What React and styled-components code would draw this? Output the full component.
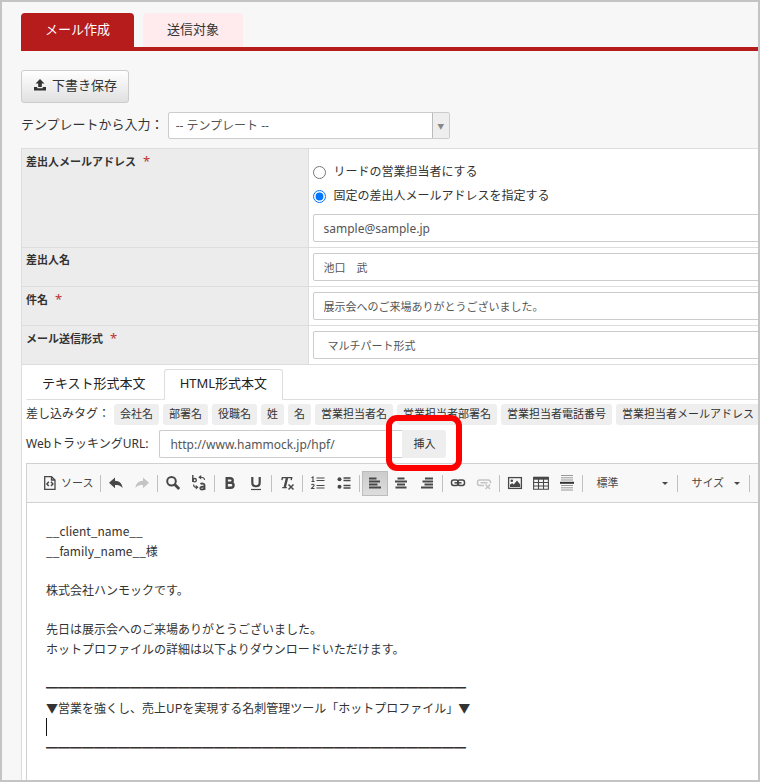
import React from 'react'
import styled, { createGlobalStyle } from 'styled-components'

const tags = ['会社名', '部署名', '役職名', '姓', '名', '営業担当者名', '営業担当者部署名', '営業担当者電話番号', '営業担当者メールアドレス']

function Icon({ children, ...rest }) {
  return (
    <svg width="16" height="16" viewBox="0 0 16 16" fill="none" stroke="#484848" aria-hidden="true" {...rest}>
      {children}
    </svg>
  )
}

const icons = {
  source: (
    <Icon strokeWidth="1.3">
      <path d="M2.700 1.700h6.800L13 5v9.300H2.700z" />
      <path d="M9.500 1.700V5H13" />
      <path d="M6.800 6.800L4.900 8.900l1.900 2.100M9 6.800l1.900 2.100L9 11" strokeWidth="1.500" />
    </Icon>
  ),
  undo: (
    <Icon stroke="none" fill="#484848">
      <path d="M7 2.500v3.300c4 .2 7 2.200 7.600 7.200-2-2.500-4.300-3-7.600-3v3.200L1 7.800z" />
    </Icon>
  ),
  redo: (
    <Icon stroke="none" fill="#c4c4c4">
      <path d="M9 2.500v3.300c-4 .2-7 2.200-7.600 7.200 2-2.500 4.300-3 7.600-3v3.200l6-5.400z" />
    </Icon>
  ),
  find: (
    <Icon strokeWidth="2">
      <circle cx="6.500" cy="6.300" r="4.300" />
      <path d="M9.800 9.600l4.400 4.400" strokeWidth="2.800" />
    </Icon>
  ),
  replace: (
    <Icon strokeWidth="1.400">
      <path d="M1.800 0v7" />
      <circle cx="3.600" cy="5.200" r="1.700" />
      <path d="M9.500 9.200c1-1 4-1 4 .8v5M13.500 11.500c-2 0-4.200.2-4.200 1.800 0 1.800 3.200 1.500 4.200 0" strokeWidth="1.800" />
      <path d="M13.500 5c0-2-1.500-2.700-4-2.700M2.500 9.500c0 2 1 2.800 3 2.800" strokeWidth="1.100" />
      <path d="M10.200 0v4.500L7.200 2.300zM4.800 10v4.600l2.800-2.300z" fill="#484848" stroke="none" />
    </Icon>
  ),
  bold: (
    <Icon strokeWidth="2.400">
      <path d="M4.700 3.200h3.500c3.400 0 3.400 4.600 0 4.600H4.700zM4.700 7.800h4c3.800 0 3.800 5 0 5h-4z" />
    </Icon>
  ),
  underline: (
    <Icon strokeWidth="2.200">
      <path d="M4.300 2v5.500c0 5 7.400 5 7.400 0V2" />
      <path d="M3 14.500h10" strokeWidth="1.200" />
    </Icon>
  ),
  clear: (
    <Icon strokeWidth="2.400">
      <path d="M8 3L5.800 12" />
      <path d="M2.900 5.200l.5-2.600h9.300l-.5 2.600M3.200 12.600h4.600" strokeWidth="1.400" />
      <path d="M9.500 9.500l5 5M14.500 9.500l-5 5" strokeWidth="1.500" />
    </Icon>
  ),
  numbered: (
    <Icon strokeWidth="1.200">
      <path d="M6.500 3h8M6.500 5.500h8M6.500 10.500h8M6.500 13h8" />
      <path d="M1.500 2.800L3 2v4.500M1.500 6.500h3M1.500 10c.5-1.200 2.600-1 2.600.3 0 1.200-2 2-2.600 3.200h3" strokeWidth="1.100" />
    </Icon>
  ),
  bulleted: (
    <Icon strokeWidth="1.300">
      <path d="M7.500 3h7M7.500 5.500h7M7.500 10.500h7M7.500 13h7" />
      <circle cx="3.500" cy="4.300" r="2" fill="#484848" stroke="none" />
      <circle cx="3.500" cy="11.800" r="2" fill="#484848" stroke="none" />
    </Icon>
  ),
  left: (
    <Icon strokeWidth="1.900">
      <path d="M2 3.500h7.500M2 6.500h11M2 9.500h8.500M2 12.500h12" />
    </Icon>
  ),
  center: (
    <Icon strokeWidth="1.900">
      <path d="M4.500 3.500h7M2 6.500h12M4 9.500h8M2.500 12.500h11" />
    </Icon>
  ),
  right: (
    <Icon strokeWidth="1.900">
      <path d="M6 3.500h8M3.500 6.500H14M5.500 9.500H14M2 12.500h12" />
    </Icon>
  ),
  link: (
    <Icon strokeWidth="1.500">
      <rect x="1.500" y="5" width="6.800" height="5.500" rx="2.200" />
      <rect x="7.700" y="5" width="6.800" height="5.500" rx="2.200" />
      <path d="M4.500 7.800h7" />
    </Icon>
  ),
  unlink: (
    <Icon stroke="#c4c4c4" strokeWidth="1.500">
      <path d="M8.500 5H3.700a2.200 2.200 0 0 0-2.200 2.200v1.100a2.200 2.200 0 0 0 2.200 2.200H8M7.500 5h4.800a2.200 2.200 0 0 1 2.200 2.200v1M4.500 7.800h7" />
      <path d="M9.500 9.500l4.500 4.500M14 9.500L9.500 14" />
    </Icon>
  ),
  image: (
    <Icon strokeWidth="1.300">
      <rect x="1.600" y="2.600" width="12.800" height="10.800" />
      <circle cx="4.800" cy="5.700" r="1.300" fill="#484848" stroke="none" />
      <path d="M3 12v-2.500l2.300-1.300 1.500 1.300L10 5.500l3.200 4V12z" fill="#484848" stroke="none" />
    </Icon>
  ),
  table: (
    <Icon strokeWidth="1.100">
      <path d="M.6 2.500h14.800v11.800H.6zM5.500 4v10M10.500 4v10M1 7.500h14M1 11h14" />
      <path d="M.5 3.200h15" strokeWidth="3" />
    </Icon>
  ),
  rule: (
    <Icon stroke="#999">
      <path d="M2 .5h12M2 2.800h12M2 5h12M2 10.500h12M2 12.800h12M2 15h12" />
      <path d="M1 7.800h14" stroke="#333" strokeWidth="2" />
    </Icon>
  ),
}

function App() {
  return (
    <Frame>
      <GlobalStyle />
      <PageTabs>
        <PageTab $active type="button">メール作成</PageTab>
        <PageTab type="button">送信対象</PageTab>
      </PageTabs>
      <SaveButton type="button">
        <svg width="14" height="14" viewBox="0 0 14 14" fill="#333" aria-hidden="true">
          <path d="M7 1l4.500 4.600H8.800V9H5.200V5.600H2.500z" />
          <path d="M1 9h3.200v1.200h5.600V9H13v3.500H1z" />
        </svg>
        下書き保存
      </SaveButton>
      <TemplateRow>
        <label htmlFor="template">テンプレートから入力：</label>
        <SelectBox>
          <select id="template">
            <option>-- テンプレート --</option>
          </select>
          <span aria-hidden="true">▼</span>
        </SelectBox>
      </TemplateRow>
      <Panel>
        <FormTable>
          <tbody>
            <tr>
              <th scope="row"><label htmlFor="address">差出人メールアドレス</label> <Required>*</Required></th>
              <td>
                <RadioList>
                  <label><input type="radio" name="sender" />リードの営業担当者にする</label>
                  <label><input type="radio" name="sender" defaultChecked />固定の差出人メールアドレスを指定する</label>
                </RadioList>
                <TextInput $latin id="address" defaultValue="sample@sample.jp" />
              </td>
            </tr>
            <tr>
              <th scope="row"><label htmlFor="name">差出人名</label></th>
              <td><TextInput id="name" defaultValue="池口　武" /></td>
            </tr>
            <tr>
              <th scope="row"><label htmlFor="subject">件名</label> <Required>*</Required></th>
              <td><TextInput id="subject" defaultValue="展示会へのご来場ありがとうございました。" /></td>
            </tr>
            <tr>
              <th scope="row"><label htmlFor="format">メール送信形式</label> <Required>*</Required></th>
              <td>
                <FormatSelect id="format">
                  <option>マルチパート形式</option>
                </FormatSelect>
              </td>
            </tr>
          </tbody>
        </FormTable>
        <Body>
          <BodyTabs>
            <BodyTab type="button">テキスト形式本文</BodyTab>
            <BodyTab $active type="button">HTML形式本文</BodyTab>
          </BodyTabs>
          <TagRow>
            <span>差し込みタグ：</span>
            {tags.map((tag) => <Tag key={tag} type="button">{tag}</Tag>)}
          </TagRow>
          <UrlRow>
            <label htmlFor="url">WebトラッキングURL:</label>
            <UrlInput $latin id="url" defaultValue="http://www.hammock.jp/hpf/" />
            <InsertWrap>
              <InsertButton type="button">挿入</InsertButton>
            </InsertWrap>
          </UrlRow>
          <Editor>
            <Toolbar>
              <ToolGroup>
                <Tool type="button">{icons.source}ソース</Tool>
              </ToolGroup>
              <ToolGroup>
                <Tool type="button" aria-label="元に戻す">{icons.undo}</Tool>
                <Tool type="button" aria-label="やり直す">{icons.redo}</Tool>
              </ToolGroup>
              <ToolGroup>
                <Tool type="button" aria-label="検索">{icons.find}</Tool>
                <Tool type="button" aria-label="置換">{icons.replace}</Tool>
              </ToolGroup>
              <ToolGroup>
                <Tool type="button" aria-label="太字">{icons.bold}</Tool>
                <Tool type="button" aria-label="下線">{icons.underline}</Tool>
              </ToolGroup>
              <ToolGroup>
                <Tool type="button" aria-label="書式を解除">{icons.clear}</Tool>
              </ToolGroup>
              <ToolGroup>
                <Tool type="button" aria-label="番号付きリスト">{icons.numbered}</Tool>
                <Tool type="button" aria-label="番号無しリスト">{icons.bulleted}</Tool>
              </ToolGroup>
              <ToolGroup>
                <Tool $on type="button" aria-label="左揃え">{icons.left}</Tool>
                <Tool type="button" aria-label="中央揃え">{icons.center}</Tool>
                <Tool type="button" aria-label="右揃え">{icons.right}</Tool>
              </ToolGroup>
              <ToolGroup>
                <Tool type="button" aria-label="リンク">{icons.link}</Tool>
                <Tool type="button" aria-label="リンクを削除">{icons.unlink}</Tool>
              </ToolGroup>
              <ToolGroup>
                <Tool type="button" aria-label="イメージ">{icons.image}</Tool>
                <Tool type="button" aria-label="表">{icons.table}</Tool>
                <Tool type="button" aria-label="横罫線">{icons.rule}</Tool>
              </ToolGroup>
              <ToolGroup>
                <Combo $width={90}>
                  <select aria-label="段落の書式"><option>標準</option></select>
                </Combo>
              </ToolGroup>
              <ToolGroup>
                <Combo $width={67}>
                  <select aria-label="サイズ"><option>サイズ</option></select>
                </Combo>
              </ToolGroup>
            </Toolbar>
            <Document>
              <p>__client_name__<br />__family_name__様</p>
              <p>株式会社ハンモックです。</p>
              <p>先日は展示会へのご来場ありがとうございました。<br />ホットプロファイルの詳細は以下よりダウンロードいただけます。</p>
              <p>
                {'━'.repeat(35)}<br />
                ▼営業を強くし、売上UPを実現する名刺管理ツール「ホットプロファイル」▼<br />
                <Caret /><br />
                {'━'.repeat(35)}
              </p>
            </Document>
          </Editor>
        </Body>
      </Panel>
    </Frame>
  )
}

const GlobalStyle = createGlobalStyle`
* {
  box-sizing: border-box;
}
body {
  margin: 0;
  background: #fff;
  color: #333;
  font-family: "Noto Sans", "Noto Sans CJK JP", sans-serif;
  font-size: 13px;
}
button, input, select {
  margin: 0;
  font-family: inherit;
  color: inherit;
}
`
const Frame = styled.main`
display: flex;
flex-direction: column;
min-height: 100vh;
padding: 11px 0 0 19px;
border: 2px solid #c4c4c4;
background: #f7f7f7;
overflow: hidden;
`
const PageTabs = styled.div`
display: flex;
align-items: flex-start;
gap: 9px;
border-bottom: 4px solid #b71c1c;
`
const PageTab = styled.button`
height: 34px;
padding: 0 24px 4px;
border: none;
border-radius: 4px 4px 0 0;
font-size: 13px;
color: ${(p) => (p.$active ? '#fff' : '#333')};
background: ${(p) => (p.$active ? '#b71c1c' : '#ffebee')};
`
const SaveButton = styled.button`
display: flex;
align-items: center;
align-self: flex-start;
gap: 5px;
height: 33px;
margin-top: 19px;
padding: 0 11px 4px;
border: 1px solid #ccc;
border-radius: 3px;
background: linear-gradient(#fff, #e0e0e0);
font-size: 13px;
`
const TemplateRow = styled.div`
display: flex;
align-items: center;
gap: 4px;
margin: 9px 0;

label {
  padding-bottom: 4px;
}
`
const SelectBox = styled.div`
display: flex;
width: 282px;
height: 27px;
border: 1px solid #ccc;
border-radius: 2px;
background: #fff;

select {
  flex: 1;
  appearance: none;
  padding: 0 7px;
  border: none;
  background: none;
  font-size: 12px;
  color: #555;
}
span {
  display: flex;
  align-items: center;
  justify-content: center;
  width: 17px;
  border-left: 1px solid #bbb;
  background: #eee;
  font-size: 7px;
  color: #888;
}
`
/* runs past the right edge of the window, like the form it holds */
const Panel = styled.div`
display: flex;
flex-direction: column;
flex: 1;
margin-right: -40px;
border-left: 1px solid #ddd;
background: #fff;
`
const FormTable = styled.table`
width: 100%;
border-collapse: collapse;

tr {
  border-top: 1px solid #ddd;
  border-bottom: 1px solid #ddd;
}
th {
  width: 286px;
  padding: 4px;
  border-right: 1px solid #ddd;
  background: #ececec;
  font-size: 11px;
  line-height: 16px;
  text-align: left;
  vertical-align: top;
}
td {
  padding: 5px 4px;
}
`
const Required = styled.span`
margin-left: 4px;
color: #b33;
font-size: 13px;
font-weight: 400;
`
const RadioList = styled.div`
display: flex;
flex-direction: column;
gap: 4px;
padding: 8px 0;

label {
  display: flex;
  align-items: center;
  gap: 8px;
  font-size: 12px;
  line-height: 20px;
}
input {
  width: 13px;
  height: 13px;
}
`
const TextInput = styled.input`
display: block;
width: 100%;
height: 28px;
padding: 0 10px;
border: 1px solid #ccc;
border-radius: 2px;
background: #fff;
font-size: ${(p) => (p.$latin ? 12 : 11)}px;
color: #555;
`
const FormatSelect = styled(TextInput).attrs({ as: 'select' })`
appearance: none;
padding: 0 14px;
`
const Body = styled.div`
display: flex;
flex-direction: column;
flex: 1;
padding: 4px 0 0 4px;
`
const BodyTabs = styled.div`
display: flex;
gap: 2px;
border-bottom: 1px solid #ddd;
`
const BodyTab = styled.button`
height: 31px;
margin-bottom: -1px;
padding: 0 15px 4px;
border: 1px solid ${(p) => (p.$active ? '#ddd' : 'transparent')};
border-bottom-color: ${(p) => (p.$active ? '#fff' : '#ddd')};
border-radius: 3px 3px 0 0;
background: #fff;
font-size: 13px;
color: #222;
`
const TagRow = styled.div`
display: flex;
align-items: center;
gap: 4px;
height: 21px;
margin-top: 4px;
font-size: 12px;
white-space: nowrap;

span {
  padding-bottom: 3px;
}
`
const Tag = styled.button`
flex: none;
height: 21px;
padding: 0 6px 3px;
border: none;
border-radius: 3px;
background: #eee;
font-size: 11px;
`
const UrlRow = styled.div`
display: flex;
align-items: center;
margin: 5px 0;
font-size: 12px;

label {
  margin-right: 11px;
  padding-bottom: 3px;
}
`
const UrlInput = styled(TextInput)`
width: 243px;
border-right: none;
border-radius: 2px 0 0 2px;
`
const InsertWrap = styled.div`
position: relative;

&::after {
  content: "";
  position: absolute;
  inset: -15px -16px -13px -16px;
  border: 6px solid #fe0000;
  border-radius: 11px;
  pointer-events: none;
}
`
const InsertButton = styled.button`
height: 28px;
padding: 0 11px 3px;
border: none;
border-radius: 0 3px 3px 0;
background: #eee;
font-size: 11px;
`
const Editor = styled.div`
flex: 1;
border: 1px solid #d1d1d1;
border-bottom: none;
`
const Toolbar = styled.div`
display: flex;
align-items: center;
height: 39px;
padding-left: 10px;
border-bottom: 1px solid #d1d1d1;
background: #f8f8f8;
`
const ToolGroup = styled.div`
display: flex;
align-items: center;
flex: none;

&::after {
  content: "";
  width: 1px;
  height: 17px;
  margin: 0 2px;
  background: #c0c0c0;
}
`
const Tool = styled.button`
display: flex;
align-items: center;
gap: 3px;
height: 25px;
padding: 0 4px;
border: 1px solid ${(p) => (p.$on ? '#bcbcbc' : 'transparent')};
background: ${(p) => (p.$on ? 'linear-gradient(#ccc, #ddd)' : 'none')};
font-size: 11px;
line-height: 16px;
color: #484848;
`
const Combo = styled.div`
display: flex;
align-items: center;
width: ${(p) => p.$width}px;
padding-right: 7px;

select {
  flex: 1;
  min-width: 0;
  appearance: none;
  padding: 0 0 2px 11px;
  border: none;
  background: none;
  font-size: 11px;
  color: #484848;
}
&::after {
  content: "";
  border: 3px solid transparent;
  border-top-color: #484848;
  border-bottom: none;
}
`
const Document = styled.div`
padding: 18px 19px 8px;
font-family: "Noto Sans CJK JP", sans-serif;
font-size: 12px;
line-height: 20px;
white-space: nowrap;

p {
  margin: 0 0 19px;
}
p:last-child {
  margin: 0;
}
`
const Caret = styled.span`
display: inline-block;
height: 18px;
border-left: 1px solid #111;
vertical-align: top;
`
export default App
